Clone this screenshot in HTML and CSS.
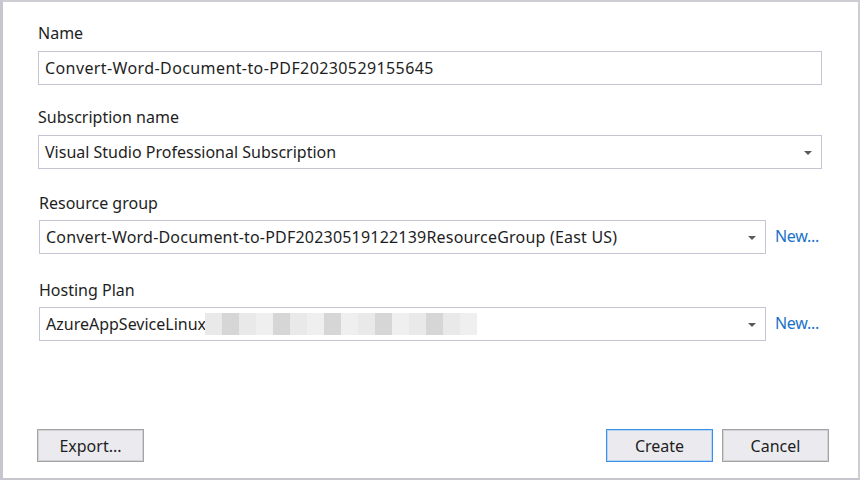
FILE: index.html
```html
<!DOCTYPE html>
<html>
<head>
<meta charset="utf-8">
<link rel="stylesheet" href="styles.css">
</head>
<body>
<div class="dialog">
  <div class="field f-name">
    <div class="label">Name</div>
    <div class="input">Convert-Word-Document-to-PDF20230529155645</div>
  </div>
  <div class="field f-sub">
    <div class="label">Subscription name</div>
    <div class="input select">Visual Studio Professional Subscription<span class="arrow"></span></div>
  </div>
  <div class="field f-rg">
    <div class="label">Resource group</div>
    <div class="row">
      <div class="input select">Convert-Word-Document-to-PDF20230519122139ResourceGroup (East US)<span class="arrow"></span></div>
      <a class="new">New...</a>
    </div>
  </div>
  <div class="field f-hp">
    <div class="label">Hosting Plan</div>
    <div class="row">
      <div class="input select">AzureAppSeviceLinux<span class="blur"><i class="b1"></i><i class="b2"></i><i class="b1"></i><i class="b3"></i><i class="b2"></i><i class="b1"></i><i class="b3"></i><i class="b2"></i><i class="b3"></i><i class="b1"></i><i class="b2"></i><i class="b3"></i><i class="b1"></i><i class="b2"></i><i class="b1"></i><i class="b3"></i></span><span class="arrow"></span></div>
      <a class="new">New...</a>
    </div>
  </div>
  <div class="footer">
    <button class="btn">Export...</button>
    <div class="spacer"></div>
    <button class="btn primary">Create</button>
    <button class="btn">Cancel</button>
  </div>
</div>
</body>
</html>
```
FILE: styles.css
```css
html, body { margin: 0; padding: 0; }
body { width: 860px; height: 480px; background: #fff; font-family: "Noto Sans", "Open Sans", sans-serif; color: #1e1e1e; }
.dialog {
  box-sizing: border-box;
  width: 860px; height: 480px;
  border-left: 3px solid #c6c6ce;
  border-top: 2px solid #cdcdd4;
  border-right: 2px solid #cdcdd4;
  border-bottom: 2px solid #c6c6ce;
  padding: 20px 36px 16px 35px;
  display: flex; flex-direction: column;
  font-size: 16px;
}
.label { line-height: 20px; height: 20px; padding-top: 1px; }
.input {
  box-sizing: border-box;
  height: 34px;
  border: 1px solid #c5c6d3;
  padding: 0 8px 0 6px;
  line-height: 32px;
  white-space: nowrap;
  overflow: hidden;
  position: relative;
  display: flex; align-items: center;
}
.f-name .input { margin-top: 8px; letter-spacing: 0.4px; }
.f-sub { margin-top: 21px; }
.f-sub .input { margin-top: 8px; }
.f-rg { margin-top: 23px; padding-left: 1px; }
.f-rg .input { letter-spacing: 0.2px; }
.f-rg .row { margin-top: 7px; }
.f-hp { margin-top: 25px; padding-left: 1px; }
.f-hp .row { margin-top: 7px; }
.row { display: flex; align-items: center; }
.row .input { width: 727px; }
.select .arrow {
  position: absolute; right: 9px; top: 15px;
  width: 0; height: 0;
  border-left: 4px solid transparent; border-right: 4px solid transparent;
  border-top: 4px solid #5a5a5a;
}
.new { color: #1a72c8; margin-left: 9px; line-height: 20px; margin-top: -3px; letter-spacing: -0.3px; }
.blur { display: inline-flex; height: 22px; margin-left: -1px; }
.blur i { display: block; width: 17px; height: 22px; }
.b1 { background: #e9e9e9; }
.b2 { background: #d6d6d6; }
.b3 { background: #efefef; }
.footer { margin-top: auto; display: flex; align-items: center; margin-right: -7px; }
.spacer { flex: 1; }
.btn {
  box-sizing: border-box;
  width: 107px; height: 33px;
  background: #ebebef;
  border: 1px solid #a3a3a3;
  box-shadow: inset 0 0 0 1px #d2d2d6;
  font-family: inherit; font-size: 16px; color: #1e1e1e;
  padding: 0; margin: 0;
}
.btn + .btn { margin-left: 9px; }
.primary { border-color: #3b8fe6; box-shadow: inset 0 0 0 1px #b7d6f4; }
.footer .btn:first-child { margin-left: -1px; }
```
